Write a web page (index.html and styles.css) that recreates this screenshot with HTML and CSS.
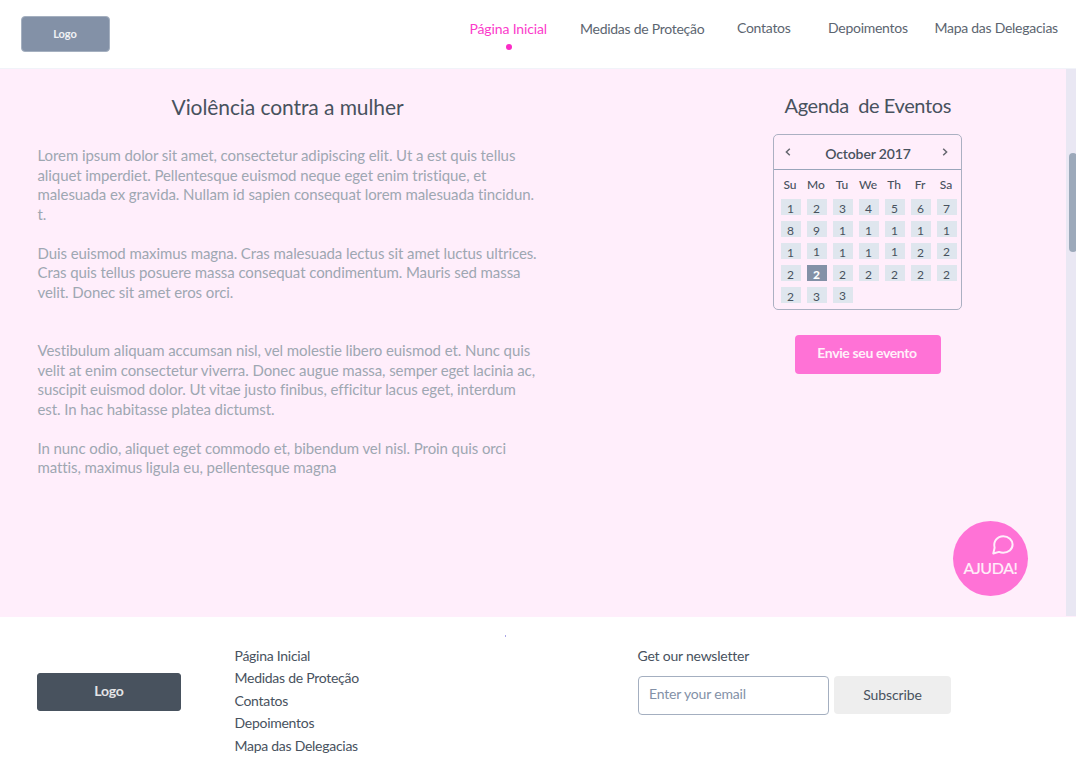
FILE: index.html
```html
<!DOCTYPE html>
<html lang="pt">
<head>
<meta charset="utf-8">
<title>Violência contra a mulher</title>
<link rel="stylesheet" href="styles.css">
</head>
<body>
<header class="header">
  <div class="logo">Logo</div>
  <nav class="nav">
    <a class="active"><span>Página Inicial</span><i class="dot"></i></a>
    <a class="low"><span>Medidas de Proteção</span></a>
    <a><span>Contatos</span></a>
    <a><span>Depoimentos</span></a>
    <a><span>Mapa das Delegacias</span></a>
  </nav>
</header>
<main class="main">
  <article class="article">
    <h1><span>Violência contra a mulher</span></h1>
    <p><span>Lorem ipsum dolor sit amet, consectetur adipiscing elit. Ut a est quis tellus</span><br><span>aliquet imperdiet. Pellentesque euismod neque eget enim tristique, et</span><br><span>malesuada ex gravida. Nullam id sapien consequat lorem malesuada tincidun.</span><br><span>t.</span></p>
    <p class="wide"><span>Duis euismod maximus magna. Cras malesuada lectus sit amet luctus ultrices.</span><br><span>Cras quis tellus posuere massa consequat condimentum. Mauris sed massa</span><br><span>velit. Donec sit amet eros orci.</span></p>
    <p><span>Vestibulum aliquam accumsan nisl, vel molestie libero euismod et. Nunc quis</span><br><span>velit at enim consectetur viverra. Donec augue massa, semper eget lacinia ac,</span><br><span>suscipit euismod dolor. Ut vitae justo finibus, efficitur lacus eget, interdum</span><br><span>est. In hac habitasse platea dictumst.</span></p>
    <p><span>In nunc odio, aliquet eget commodo et, bibendum vel nisl. Proin quis orci</span><br><span>mattis, maximus ligula eu, pellentesque magna</span></p>
  </article>
  <aside class="events">
    <h2><span>Agenda &nbsp;de Eventos</span></h2>
    <section class="calendar">
      <div class="month">
        <svg width="6" height="8" viewBox="0 0 6 8"><path d="M4.8.8 1.4 4l3.4 3.2"/></svg>
        <strong>October 2017</strong>
        <svg width="6" height="8" viewBox="0 0 6 8"><path d="M1.2.8 4.6 4 1.2 7.2"/></svg>
      </div>
      <div class="weekdays"><span>Su</span><span>Mo</span><span>Tu</span><span>We</span><span>Th</span><span>Fr</span><span>Sa</span></div>
      <div class="days">
        <b>1</b><b>2</b><b>3</b><b>4</b><b>5</b><b>6</b><b>7</b>
        <b>8</b><b>9</b><b>1</b><b>1</b><b>1</b><b>1</b><b>1</b>
        <b>1</b><b class="up">1</b><b>1</b><b>1</b><b class="up">1</b><b>2</b><b class="up">2</b>
        <b>2</b><b class="today">2</b><b>2</b><b>2</b><b>2</b><b>2</b><b>2</b>
        <b>2</b><b>3</b><b class="up">3</b>
      </div>
    </section>
    <button class="send"><span>Envie seu evento</span></button>
  </aside>
  <div class="scrollbar"><div class="thumb"></div></div>
  <button class="help">
    <svg width="22" height="20" viewBox="0 0 22 20"><path d="M1.3 18.5 2.600 12.800C1 6.600 5.200 1.300 11.200 1.300c5.300 0 9.400 3.500 9.400 8.200 0 4.900-4.300 8.200-9.500 8.200-1.600 0-2.800-.3-4.100-.8Z"/></svg>
    <span>AJUDA!</span>
  </button>
</main>
<footer class="footer">
  <div class="logo dark">Logo</div>
  <ul class="links">
    <li><span>Página Inicial</span></li><li><span>Medidas de Proteção</span></li><li><span>Contatos</span></li><li><span>Depoimentos</span></li><li><span>Mapa das Delegacias</span></li>
  </ul>
  <i class="speck"></i>
  <form class="newsletter">
    <label>Get our newsletter</label>
    <div class="row"><div class="field"><span>Enter your email</span></div><button type="button" class="subscribe"><span>Subscribe</span></button></div>
  </form>
</footer>
</body>
</html>
```
FILE: styles.css
```css
* { box-sizing: border-box; }
body { margin: 0; width: 1076px; height: 766px; overflow: hidden; background: #fff; color: #48525e; font-family: Lato, "Liberation Sans", sans-serif; font-size: 14px; }
button { border: 0; padding: 0; font: inherit; color: inherit; }
.logo { display: flex; align-items: center; justify-content: center; width: 89px; height: 36px; padding-bottom: 2px; border: 1px solid #a5b0c0; border-radius: 4px; background: #8391a7; color: #f0f2f5; font-size: 11px; font-weight: 700; }
.header { display: flex; height: 69px; padding: 16px 0 0 20.500px; border-bottom: 1px solid #f1f3f9; }
.nav { display: grid; grid-template-columns: 110.500px 157px 91px 106.500px auto; margin-left: 360px; padding-top: 3px; line-height: 17px; letter-spacing: -.27px; white-space: nowrap; color: #5c6570; }
.nav .active { color: #fb3bcb; padding-top: 1px; letter-spacing: -.14px; }
.nav .low { padding-top: 1px; }
.dot { display: block; width: 6px; height: 6px; margin: 7px 0 0 36.500px; border-radius: 50%; background: #fb2cc6; }
.main { position: relative; display: flex; height: 548px; background: #ffeefb; }
.article { width: 773px; padding-left: 37.500px; color: #9ea7b2; font-size: 15px; line-height: 19.500px; letter-spacing: -.085px; white-space: nowrap; }
h1, h2 { margin: 0; color: #48525e; font-weight: 400; }
h1 { padding: 24px 0 0 134px; height: 77px; font-size: 21px; line-height: 27px; }
p { margin: 0 0 19.500px; }
.wide { margin-bottom: 39px; }
.events { width: 293px; }
h2 { padding: 23px 0 0 11.500px; height: 65px; font-size: 20px; line-height: 26px; letter-spacing: -.4px; }
.calendar { width: 189px; height: 176px; border: 1px solid #abb0c2; border-radius: 5px; }
.month { display: flex; justify-content: space-between; height: 35px; padding: 13px 13px 0 11px; border-bottom: 1px solid #99a5ba; line-height: 11px; }
.month svg { fill: none; stroke: #65676f; stroke-width: 1.500; }
.month strong { font-weight: 600; padding-left: 3px; letter-spacing: -.12px; }
.weekdays, .days { display: grid; grid-template-columns: repeat(7, 20px); column-gap: 6px; margin-left: 6px; text-align: center; }
.weekdays { height: 29px; padding-top: 7px; font-size: 12px; line-height: 15px; font-weight: 500; }
.days { grid-auto-rows: 16px; row-gap: 6px; margin-left: 6.500px; }
.days b { height: 16px; background: #dfe6ee; font-size: 12px; font-weight: 400; line-height: 19px; }
.days .up { line-height: 17px; }
.days .today { background: #8391a7; color: #fff; font-weight: 900; }
.send { width: 146px; height: 39px; margin: 25px 0 0 22px; padding: 0 2px 4px 0; border-radius: 4px; background: #ff72d6; color: #fff0fa; font-weight: 700; letter-spacing: -.36px; }
.scrollbar { width: 10px; height: 547px; background: #e9e7f3; }
.thumb { width: 8px; height: 99px; margin: 84px 0 0 3px; border-radius: 4px; background: #9ca9ba; }
.help { position: absolute; left: 953px; top: 452px; width: 75px; height: 75px; border-radius: 50%; background: #ff72d6; color: #fff0fa; font-size: 16px; line-height: 18px; letter-spacing: -.4px; display: flex; flex-direction: column; align-items: center; padding-top: 14px; white-space: nowrap; }
.help span { -webkit-text-stroke: .2px #fff0fa; }
.help svg { flex: none; margin: 0 0 4px 25px; fill: none; stroke: #ffeefb; stroke-width: 2; stroke-linejoin: round; }
.footer { display: flex; height: 149px; padding-left: 37px; }
.footer .dark { width: 144px; height: 38px; margin-top: 56px; padding-bottom: 3px; background: #48525e; border-color: #48525e; color: #e4e4e6; font-size: 14px; letter-spacing: -.2px; border-radius: 3px; }
.links { width: 270px; margin: 27.500px 0 0 53.500px; padding: 0; list-style: none; line-height: 22.500px; letter-spacing: -.27px; }
.speck { width: 1px; height: 2px; margin: 18px 0 0 .5px; background: #aaa6e8; }
.newsletter { margin: 30px 0 0 132px; line-height: 17px; letter-spacing: -.22px; }
.newsletter label { display: block; margin-left: -.5px; }
.row { display: flex; gap: 5px; margin-top: 12px; }
.field { width: 191px; height: 39px; border: 1px solid #a4afc0; border-radius: 4px; padding: 8px 10px; color: #8391a7; letter-spacing: -.18px; }
.subscribe { width: 117px; height: 38px; padding-bottom: 2px; background: #eee; border-radius: 4px; letter-spacing: -.1px; }
```
